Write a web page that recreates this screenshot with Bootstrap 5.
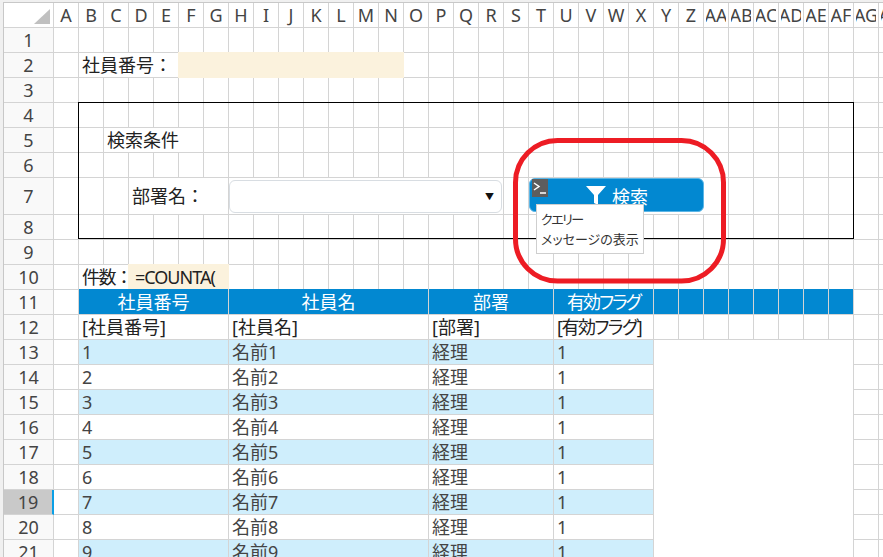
<!DOCTYPE html>
<html lang="ja">
<head>
<meta charset="utf-8">
<title>社員検索</title>
<link rel="stylesheet" href="https://cdn.jsdelivr.net/npm/bootstrap@5.3.0/dist/css/bootstrap.min.css">
<style>
:root{--gl:#d4d4d4;--blue:#0288d1;}
html,body{height:557px;overflow:hidden;}
body{margin:0;background:#f0f0f0;font-family:"Noto Sans","Noto Sans CJK JP",sans-serif;font-size:18px;color:#222;}
.sheet{width:880px;height:555px;margin:2px 0 0 3px;background:#fff;border-top:1px solid #c8c8c8;border-left:1px solid #c8c8c8;line-height:1;}
.colhead{height:25px;}
.corner{width:50px;flex:none;border-right:1px solid var(--gl);border-bottom:1px solid var(--gl);}
.corner svg{display:block;}
.chd{width:25px;flex:none;border-right:1px solid var(--gl);border-bottom:1px solid var(--gl);color:#444;font-size:18px;white-space:nowrap;overflow:hidden;}
.twoch{width:20px;overflow:hidden;display:flex;justify-content:center;}
.xrow{height:25px;}
.xrow.tall{height:37px;}
.rhd{width:50px;flex:none;background:#f9f9f9;border-right:1px solid var(--gl);border-bottom:1px solid var(--gl);color:#444;font-size:18px;}
.rhd.sel{background:#c9c9c9;border-right:2px solid #0a9fe6;}
.rbody{flex:1;display:grid;grid-template-columns:repeat(34,25px);grid-template-rows:1fr;background-color:#fff;
  background-image:linear-gradient(to left,var(--gl) 1px,transparent 1px),linear-gradient(to top,var(--gl) 1px,transparent 1px);
  background-size:25px 100%,100% 100%;}
.cl{border-right:1px solid var(--gl);border-bottom:1px solid var(--gl);background:#fff;padding-left:3px;white-space:nowrap;overflow:hidden;display:flex;align-items:center;min-width:0;}
.tx18{font-size:18px;color:#222;}
.fill{background:#fbf2dd;border-color:transparent;margin:-1px 0 0 -1px;}
.formula{padding-left:7px;letter-spacing:-1px;}
.countlbl{letter-spacing:-1.5px;overflow:visible;}
.hcell{background:var(--blue);color:#fff;justify-content:center;font-size:18px;padding-left:0;margin-top:-1px;}
.hblank{background-color:var(--blue);background-image:linear-gradient(to left,var(--gl) 1px,transparent 1px);background-size:25px 100%;padding:0;margin-top:-1px;}
.dat{color:#444;font-size:18px;}
.odd{background:#cfeefc;}
.plain{background:#fff;border-bottom:0;padding:0;}
.kana{font-feature-settings:"palt";}
.flagh{letter-spacing:-2px;}
.flagr{letter-spacing:-1.5px;}
.g2-6{grid-column:2/6}.g6-15{grid-column:6/15}.g3-7{grid-column:3/7}.g4-8{grid-column:4/8}
.g2-4{grid-column:2/4}.g2-8{grid-column:2/8}.g8-16{grid-column:8/16}.g16-21{grid-column:16/21}.g21-25{grid-column:21/25}.g25-33{grid-column:25/33}
.selcell{grid-column:8/19;padding:1px 1px 1px 0;background:#fff;}
.selbox{width:100%;height:33px;border:1px solid #d8dde2;border-radius:6px;padding:0 7px;font-size:9px;color:#111;line-height:1;}
.btncell{grid-column:20/27;padding:0;background:#fff;align-items:flex-start;border-right:0;}
.runbtn{width:100%;height:34px;border:1px solid #5cb6e6;border-radius:6px;background:var(--blue);color:#fff;font-size:18px;padding:0 0 0 1px;line-height:1;gap:6px;}
.runbtn:hover{background:var(--blue);color:#fff;border-color:#5cb6e6;}
.btnlabel{padding-top:3px;}
.qicon{left:2px;top:0;width:16px;height:18px;background:#5d5d5d;}
.framebox{left:74px;top:99px;width:776px;height:137px;border:1px solid #000;pointer-events:none;}
.ringmark{left:-4px;top:-3px;pointer-events:none;}
.qtip{left:532px;top:201px;width:108px;height:50px;background:#fff;border:1px solid #cfcfcf;color:#333;font-size:13px;line-height:20px;padding:4px 0 0 4px;white-space:nowrap;}
.qline{letter-spacing:-1.5px;}
</style>
</head>
<body>
<div class="sheet position-relative overflow-hidden">
  <div class="colhead d-flex">
    <div class="corner"><svg width="49" height="24" viewBox="0 0 49 24"><polygon points="30,21 46,21 46,6" fill="#c0c0c0"/></svg></div>
    <div class="chd d-flex align-items-center justify-content-center">A</div><div class="chd d-flex align-items-center justify-content-center">B</div><div class="chd d-flex align-items-center justify-content-center">C</div><div class="chd d-flex align-items-center justify-content-center">D</div><div class="chd d-flex align-items-center justify-content-center">E</div><div class="chd d-flex align-items-center justify-content-center">F</div><div class="chd d-flex align-items-center justify-content-center">G</div><div class="chd d-flex align-items-center justify-content-center">H</div><div class="chd d-flex align-items-center justify-content-center">I</div><div class="chd d-flex align-items-center justify-content-center">J</div><div class="chd d-flex align-items-center justify-content-center">K</div><div class="chd d-flex align-items-center justify-content-center">L</div><div class="chd d-flex align-items-center justify-content-center">M</div><div class="chd d-flex align-items-center justify-content-center">N</div><div class="chd d-flex align-items-center justify-content-center">O</div><div class="chd d-flex align-items-center justify-content-center">P</div><div class="chd d-flex align-items-center justify-content-center">Q</div><div class="chd d-flex align-items-center justify-content-center">R</div><div class="chd d-flex align-items-center justify-content-center">S</div><div class="chd d-flex align-items-center justify-content-center">T</div><div class="chd d-flex align-items-center justify-content-center">U</div><div class="chd d-flex align-items-center justify-content-center">V</div><div class="chd d-flex align-items-center justify-content-center">W</div><div class="chd d-flex align-items-center justify-content-center">X</div><div class="chd d-flex align-items-center justify-content-center">Y</div><div class="chd d-flex align-items-center justify-content-center">Z</div><div class="chd d-flex align-items-center justify-content-center"><span class="twoch">AA</span></div><div class="chd d-flex align-items-center justify-content-center"><span class="twoch">AB</span></div><div class="chd d-flex align-items-center justify-content-center"><span class="twoch">AC</span></div><div class="chd d-flex align-items-center justify-content-center"><span class="twoch">AD</span></div><div class="chd d-flex align-items-center justify-content-center"><span class="twoch">AE</span></div><div class="chd d-flex align-items-center justify-content-center"><span class="twoch">AF</span></div><div class="chd d-flex align-items-center justify-content-center"><span class="twoch">AG</span></div><div class="chd d-flex align-items-center justify-content-center"><span class="twoch">AH</span></div>
  </div>

  <div class="xrow d-flex"><div class="rhd d-flex align-items-center justify-content-center">1</div><div class="rbody"></div></div>
  <div class="xrow d-flex"><div class="rhd d-flex align-items-center justify-content-center">2</div><div class="rbody"><div class="cl g2-6 tx18">社員番号：</div><div class="cl g6-15 fill"></div></div></div>
  <div class="xrow d-flex"><div class="rhd d-flex align-items-center justify-content-center">3</div><div class="rbody"></div></div>
  <div class="xrow d-flex"><div class="rhd d-flex align-items-center justify-content-center">4</div><div class="rbody"></div></div>
  <div class="xrow d-flex"><div class="rhd d-flex align-items-center justify-content-center">5</div><div class="rbody"><div class="cl g3-7 tx18">検索条件</div></div></div>
  <div class="xrow d-flex"><div class="rhd d-flex align-items-center justify-content-center">6</div><div class="rbody"></div></div>
  <div class="xrow tall d-flex"><div class="rhd d-flex align-items-center justify-content-center">7</div><div class="rbody">
    <div class="cl g4-8 tx18">部署名：</div>
    <div class="cl selcell"><div class="selbox d-flex align-items-center justify-content-end">▼</div></div>
    <div class="cl btncell"><button type="button" class="btn runbtn position-relative d-flex align-items-center justify-content-center">
      <span class="qicon position-absolute d-block"><svg width="16" height="18" viewBox="0 0 16 18" class="d-block"><path d="M2 4l5 3.5L2 11" fill="none" stroke="#fff" stroke-width="1.5"/><path d="M8 14h6" stroke="#fff" stroke-width="1.5"/></svg></span>
      <svg width="20" height="21" viewBox="0 0 20 21"><path d="M0 1h20l-8 9v10l-4-2v-8z" fill="#fff"/></svg><span class="btnlabel">検索</span>
    </button></div>
  </div></div>
  <div class="xrow d-flex"><div class="rhd d-flex align-items-center justify-content-center">8</div><div class="rbody"></div></div>
  <div class="xrow d-flex"><div class="rhd d-flex align-items-center justify-content-center">9</div><div class="rbody"></div></div>
  <div class="xrow d-flex"><div class="rhd d-flex align-items-center justify-content-center">10</div><div class="rbody"><div class="cl g2-4 tx18 countlbl">件数：</div><div class="cl g4-8 fill tx18 formula">=COUNTA(</div></div></div>
  <div class="xrow d-flex"><div class="rhd d-flex align-items-center justify-content-center">11</div><div class="rbody"><div class="cl g2-8 hcell">社員番号</div><div class="cl g8-16 hcell">社員名</div><div class="cl g16-21 hcell">部署</div><div class="cl g21-25 hcell kana flagh">有効フラグ</div><div class="cl g25-33 hblank"></div></div></div>
  <div class="xrow d-flex"><div class="rhd d-flex align-items-center justify-content-center">12</div><div class="rbody"><div class="cl g2-8 tx18">[社員番号]</div><div class="cl g8-16 tx18">[社員名]</div><div class="cl g16-21 tx18">[部署]</div><div class="cl g21-25 tx18 kana flagr">[有効フラグ]</div></div></div>
  <div class="xrow d-flex"><div class="rhd d-flex align-items-center justify-content-center">13</div><div class="rbody"><div class="cl g2-8 dat odd">1</div><div class="cl g8-16 dat odd">名前1</div><div class="cl g16-21 dat odd">経理</div><div class="cl g21-25 dat odd">1</div><div class="cl g25-33 plain"></div></div></div>
  <div class="xrow d-flex"><div class="rhd d-flex align-items-center justify-content-center">14</div><div class="rbody"><div class="cl g2-8 dat">2</div><div class="cl g8-16 dat">名前2</div><div class="cl g16-21 dat">経理</div><div class="cl g21-25 dat">1</div><div class="cl g25-33 plain"></div></div></div>
  <div class="xrow d-flex"><div class="rhd d-flex align-items-center justify-content-center">15</div><div class="rbody"><div class="cl g2-8 dat odd">3</div><div class="cl g8-16 dat odd">名前3</div><div class="cl g16-21 dat odd">経理</div><div class="cl g21-25 dat odd">1</div><div class="cl g25-33 plain"></div></div></div>
  <div class="xrow d-flex"><div class="rhd d-flex align-items-center justify-content-center">16</div><div class="rbody"><div class="cl g2-8 dat">4</div><div class="cl g8-16 dat">名前4</div><div class="cl g16-21 dat">経理</div><div class="cl g21-25 dat">1</div><div class="cl g25-33 plain"></div></div></div>
  <div class="xrow d-flex"><div class="rhd d-flex align-items-center justify-content-center">17</div><div class="rbody"><div class="cl g2-8 dat odd">5</div><div class="cl g8-16 dat odd">名前5</div><div class="cl g16-21 dat odd">経理</div><div class="cl g21-25 dat odd">1</div><div class="cl g25-33 plain"></div></div></div>
  <div class="xrow d-flex"><div class="rhd d-flex align-items-center justify-content-center">18</div><div class="rbody"><div class="cl g2-8 dat">6</div><div class="cl g8-16 dat">名前6</div><div class="cl g16-21 dat">経理</div><div class="cl g21-25 dat">1</div><div class="cl g25-33 plain"></div></div></div>
  <div class="xrow d-flex"><div class="rhd sel d-flex align-items-center justify-content-center">19</div><div class="rbody"><div class="cl g2-8 dat odd">7</div><div class="cl g8-16 dat odd">名前7</div><div class="cl g16-21 dat odd">経理</div><div class="cl g21-25 dat odd">1</div><div class="cl g25-33 plain"></div></div></div>
  <div class="xrow d-flex"><div class="rhd d-flex align-items-center justify-content-center">20</div><div class="rbody"><div class="cl g2-8 dat">8</div><div class="cl g8-16 dat">名前8</div><div class="cl g16-21 dat">経理</div><div class="cl g21-25 dat">1</div><div class="cl g25-33 plain"></div></div></div>
  <div class="xrow d-flex"><div class="rhd d-flex align-items-center justify-content-center">21</div><div class="rbody"><div class="cl g2-8 dat odd">9</div><div class="cl g8-16 dat odd">名前9</div><div class="cl g16-21 dat odd">経理</div><div class="cl g21-25 dat odd">1</div><div class="cl g25-33 plain"></div></div></div>

  <div class="framebox position-absolute"></div>
  <div class="qtip position-absolute kana"><span class="qline">クエリー</span><br>メッセージの表示</div>
  <svg class="ringmark position-absolute" width="883" height="557" viewBox="0 0 883 557"><rect x="515.5" y="140.5" width="208" height="140.5" rx="42" ry="42" fill="none" stroke="#ed1c24" stroke-width="5"/></svg>
</div>
<script src="https://cdn.jsdelivr.net/npm/bootstrap@5.3.0/dist/js/bootstrap.bundle.min.js"></script>
</body>
</html>
